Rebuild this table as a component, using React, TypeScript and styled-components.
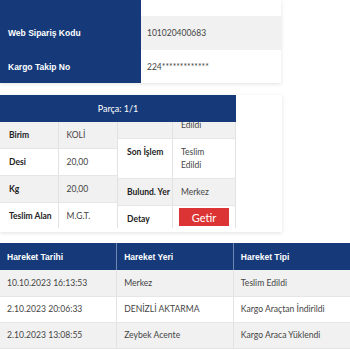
import React from "react";
import styled, { createGlobalStyle } from "styled-components";

const NAVY = "#163a79";

const GlobalStyle = createGlobalStyle`
  html, body {
    margin: 0;
    padding: 0;
    background: #ffffff;
  }
  body {
    font-family: Lato, "Open Sans", sans-serif;
    color: #333333;
  }
  * {
    box-sizing: border-box;
  }
`;

const Page = styled.div`
  width: 350px;
  display: flex;
  flex-direction: column;
`;

const InfoCard = styled.div`
  width: 281px;
  background: #ffffff;
  box-shadow: 0 1px 4px rgba(0, 0, 0, 0.12);
`;

const InfoTable = styled.table`
  width: 100%;
  border-collapse: collapse;
`;

const InfoRow = styled.tr<{ $h: number; $shade?: boolean }>`
  height: ${(p) => p.$h}px;
  background: ${(p) => (p.$shade ? "#f1f1f1" : "#ffffff")};
  & + & td {
    border-top: 1px solid #e4e4e4;
  }
`;

const InfoLabel = styled.th`
  width: 141px;
  background: ${NAVY};
  color: #ffffff;
  font-family: "Liberation Sans", Arial, sans-serif;
  font-weight: 700;
  font-size: 8.5px;
  text-align: left;
  padding: 0 8px;
`;

const InfoValue = styled.td`
  font-size: 8.5px;
  color: #444444;
  padding: 0 6px;
`;

const PartCard = styled.div`
  margin-top: 12px;
  width: 282px;
  height: 137px;
  background: #ffffff;
  box-shadow: 0 1px 4px rgba(0, 0, 0, 0.12);
  overflow: hidden;
`;

const PartHeader = styled.div`
  width: 236px;
  height: 27px;
  background: ${NAVY};
  color: #ffffff;
  font-size: 9px;
  display: flex;
  align-items: center;
  justify-content: center;
`;

const PartBody = styled.div`
  width: 236px;
  height: 106px;
  display: flex;
`;

const DetailClip = styled.div<{ $w: number }>`
  width: ${(p) => p.$w}px;
  height: 106px;
  overflow: hidden;
  border-right: 1px solid #e2e2e2;
`;

const DetailTable = styled.table<{ $shift?: number }>`
  width: 100%;
  border-collapse: collapse;
  margin-top: ${(p) => -(p.$shift ?? 0)}px;
  font-size: 8.5px;
  line-height: 13px;
`;

const DetailRow = styled.tr<{ $shade?: boolean }>`
  background: ${(p) => (p.$shade ? "#f1f1f1" : "#ffffff")};
  & td {
    border-bottom: 1px solid #e6e6e6;
  }
`;

const DetailLabel = styled.td<{ $w: number }>`
  width: ${(p) => p.$w}px;
  font-weight: 700;
  color: #222222;
  padding: 7px 0 6px 9px;
  vertical-align: top;
  border-right: 1px solid #e2e2e2;
  white-space: nowrap;
`;

const DetailValue = styled.td`
  color: #444444;
  padding: 7px 6px 6px 8px;
  vertical-align: top;
`;

const GetirButton = styled.button`
  display: block;
  width: 50px;
  height: 18px;
  margin: -5px 0 0 -2px;
  border: none;
  background: #dc3434;
  color: #ffffff;
  font-family: Lato, sans-serif;
  font-size: 11px;
  padding: 0;
  cursor: pointer;
`;

const MoveTable = styled.table`
  margin-top: 11px;
  width: 350px;
  border-collapse: collapse;
  table-layout: fixed;
`;

const MoveHead = styled.th`
  height: 27px;
  background: ${NAVY};
  color: #ffffff;
  font-family: "Liberation Sans", Arial, sans-serif;
  font-weight: 700;
  font-size: 8.5px;
  text-align: left;
  padding: 0 7px;
  & + & {
    border-left: 1px solid #6f86b0;
  }
`;

const MoveRow = styled.tr<{ $shade?: boolean }>`
  height: 26px;
  background: ${(p) => (p.$shade ? "#f1f1f1" : "#ffffff")};
`;

const MoveCell = styled.td`
  font-size: 8.6px;
  color: #444444;
  padding: 0 7px;
  border-bottom: 1px solid #e6e6e6;
  & + & {
    border-left: 1px solid #e2e2e2;
  }
`;

const moves = [
  ["10.10.2023 16:13:53", "Merkez", "Teslim Edildi"],
  ["2.10.2023 20:06:33", "DENİZLİ AKTARMA", "Kargo Araçtan İndirildi"],
  ["2.10.2023 13:08:55", "Zeybek Acente", "Kargo Araca Yüklendi"],
];

export default function App() {
  return (
    <Page>
      <GlobalStyle />
      <InfoCard>
        <InfoTable>
          <tbody>
            <InfoRow $h={16}>
              <InfoLabel />
              <InfoValue />
            </InfoRow>
            <InfoRow $h={34} $shade>
              <InfoLabel>Web Sipariş Kodu</InfoLabel>
              <InfoValue>101020400683</InfoValue>
            </InfoRow>
            <InfoRow $h={33}>
              <InfoLabel>Kargo Takip No</InfoLabel>
              <InfoValue>224*************</InfoValue>
            </InfoRow>
          </tbody>
        </InfoTable>
      </InfoCard>

      <PartCard>
        <PartHeader>Parça: 1/1</PartHeader>
        <PartBody>
          <DetailClip $w={118}>
            <DetailTable>
              <tbody>
                <DetailRow $shade>
                  <DetailLabel $w={58}>Birim</DetailLabel>
                  <DetailValue>KOLİ</DetailValue>
                </DetailRow>
                <DetailRow>
                  <DetailLabel $w={58}>Desi</DetailLabel>
                  <DetailValue>20,00</DetailValue>
                </DetailRow>
                <DetailRow $shade>
                  <DetailLabel $w={58}>Kg</DetailLabel>
                  <DetailValue>20,00</DetailValue>
                </DetailRow>
                <DetailRow>
                  <DetailLabel $w={58}>Teslim Alan</DetailLabel>
                  <DetailValue>M.G.T.</DetailValue>
                </DetailRow>
              </tbody>
            </DetailTable>
          </DetailClip>
          <DetailClip $w={118}>
            <DetailTable $shift={23}>
              <tbody>
                <DetailRow $shade>
                  <DetailLabel $w={59} />
                  <DetailValue>
                    Teslim
                    <br />
                    Edildi
                  </DetailValue>
                </DetailRow>
                <DetailRow>
                  <DetailLabel $w={59}>Son İşlem</DetailLabel>
                  <DetailValue>
                    Teslim
                    <br />
                    Edildi
                  </DetailValue>
                </DetailRow>
                <DetailRow $shade>
                  <DetailLabel $w={59}>Bulund. Yer</DetailLabel>
                  <DetailValue>Merkez</DetailValue>
                </DetailRow>
                <DetailRow>
                  <DetailLabel $w={59}>Detay</DetailLabel>
                  <DetailValue>
                    <GetirButton>Getir</GetirButton>
                  </DetailValue>
                </DetailRow>
              </tbody>
            </DetailTable>
          </DetailClip>
        </PartBody>
      </PartCard>

      <MoveTable>
        <thead>
          <tr>
            <MoveHead>Hareket Tarihi</MoveHead>
            <MoveHead>Hareket Yeri</MoveHead>
            <MoveHead>Hareket Tipi</MoveHead>
          </tr>
        </thead>
        <tbody>
          {moves.map((m, i) => (
            <MoveRow key={i} $shade={i % 2 === 0}>
              {m.map((c, j) => (
                <MoveCell key={j}>{c}</MoveCell>
              ))}
            </MoveRow>
          ))}
        </tbody>
      </MoveTable>
    </Page>
  );
}
